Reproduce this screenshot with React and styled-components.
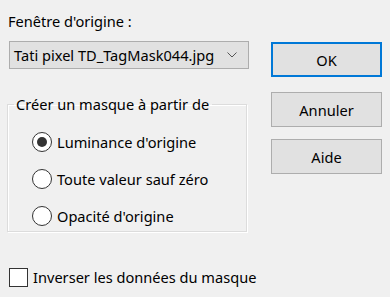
import React from 'react';
import styled, { createGlobalStyle } from 'styled-components';

const Global = createGlobalStyle`
  html, body {
    margin: 0;
    padding: 0;
    background: #f0f0f0;
  }
  body {
    font-family: "Noto Sans", "Liberation Sans", sans-serif;
    font-size: 14.6px;
    color: #000;
  }
`;

const Dialog = styled.div`
  width: 390px;
  height: 297px;
  box-sizing: border-box;
  padding: 11px 8px 0 9px;
  display: flex;
  gap: 22px;
  background: #f0f0f0;
`;

const LeftColumn = styled.div`
  width: 240px;
  display: flex;
  flex-direction: column;
  white-space: nowrap;
`;

const RightColumn = styled.div`
  width: 111px;
  display: flex;
  flex-direction: column;
  padding-top: 31px;
`;

const Label = styled.div`
  line-height: 20px;
  height: 20px;
  margin-left: -1px;
`;

const Combo = styled.div`
  margin-top: 10px;
  height: 28px;
  box-sizing: border-box;
  border: 1px solid #adadad;
  background: #e1e1e1;
  display: flex;
  align-items: center;
  justify-content: space-between;
  padding: 0 11px 0 4px;
  line-height: 20px;
`;

const Chevron = () => (
  <svg width="10" height="6" viewBox="0 0 10 6">
    <path d="M0.5 0.5 L5 5 L9.5 0.5" fill="none" stroke="#555" strokeWidth="1" />
  </svg>
);

const Group = styled.fieldset`
  margin: 25px 0 0 -2px;
  width: 240px;
  height: 138px;
  box-sizing: border-box;
  padding: 0;
  border: 1px solid #dcdcdc;
  box-shadow: inset 1px 1px 0 #fff, 1px 1px 0 #fff;
  display: flex;
  flex-direction: column;
`;

const Legend = styled.legend`
  padding: 0 3px 0 2px;
  margin-left: 6px;
  line-height: 20px;
`;

const Options = styled.div`
  display: flex;
  flex-direction: column;
  gap: 17px;
  padding: 18px 0 0 24px;
`;

const OptionRow = styled.div`
  display: flex;
  align-items: center;
  gap: 5px;
  height: 20px;
  line-height: 20px;
`;

const Radio = styled.span`
  flex: none;
  width: 20px;
  height: 20px;
  box-sizing: border-box;
  border-radius: 50%;
  border: 1px solid #333;
  background: #fff;
  display: flex;
  align-items: center;
  justify-content: center;

  &::after {
    content: '';
    width: 10px;
    height: 10px;
    border-radius: 50%;
    background: ${(p) => (p.$checked ? '#333' : 'transparent')};
  }
`;

const CheckRow = styled.div`
  display: flex;
  align-items: center;
  gap: 5px;
  width: max-content;
  margin-top: 35px;
  line-height: 20px;
`;

const CheckBox = styled.span`
  flex: none;
  width: 19px;
  height: 19px;
  box-sizing: border-box;
  border: 1px solid #333;
  background: #fff;
`;

const Button = styled.div`
  height: 35px;
  box-sizing: border-box;
  border: ${(p) => (p.$default ? '2px solid #0078d7' : '1px solid #adadad')};
  background: #e1e1e1;
  display: flex;
  align-items: center;
  justify-content: center;
  margin-top: ${(p) => p.$gap || 0}px;
`;

export default function App() {
  return (
    <>
      <Global />
      <Dialog>
        <LeftColumn>
          <Label>Fenêtre d'origine :</Label>
          <Combo>
            <span>Tati pixel TD_TagMask044.jpg</span>
            <Chevron />
          </Combo>
          <Group>
            <Legend>Créer un masque à partir de</Legend>
            <Options>
              <OptionRow>
                <Radio $checked />
                Luminance d'origine
              </OptionRow>
              <OptionRow>
                <Radio />
                Toute valeur sauf zéro
              </OptionRow>
              <OptionRow>
                <Radio />
                Opacité d'origine
              </OptionRow>
            </Options>
          </Group>
          <CheckRow>
            <CheckBox />
            Inverser les données du masque
          </CheckRow>
        </LeftColumn>
        <RightColumn>
          <Button $default>OK</Button>
          <Button $gap={15}>Annuler</Button>
          <Button $gap={12}>Aide</Button>
        </RightColumn>
      </Dialog>
    </>
  );
}
